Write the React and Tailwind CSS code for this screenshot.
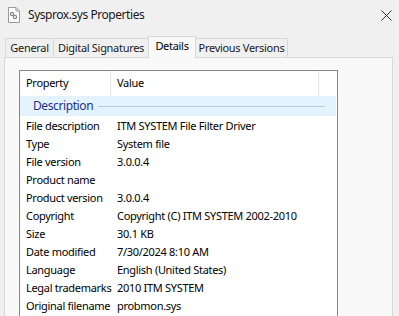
const rows = [
  ['File description', 'ITM SYSTEM File Filter Driver'],
  ['Type', 'System file'],
  ['File version', '3.0.0.4'],
  ['Product name', ''],
  ['Product version', '3.0.0.4'],
  ['Copyright', 'Copyright (C) ITM SYSTEM 2002-2010'],
  ['Size', '30.1 KB'],
  ['Date modified', '7/30/2024 8:10 AM'],
  ['Language', 'English (United States)'],
  ['Legal trademarks', '2010 ITM SYSTEM'],
  ['Original filename', 'probmon.sys'],
]

function FileIcon() {
  return (
    <svg width="14" height="16" viewBox="0 0 14 16" className="shrink-0">
      <path d="M1.5 0.5h7.5l3.5 3.5v11.5h-11z" fill="#fff" stroke="#9a9a9a" />
      <path d="M9 0.5v3.5h3.5" fill="none" stroke="#9a9a9a" />
      <circle cx="5" cy="7" r="1.6" fill="none" stroke="#7d8790" strokeWidth="1.2" />
      <circle cx="8" cy="10" r="1.6" fill="none" stroke="#7d8790" strokeWidth="1.2" />
    </svg>
  )
}

function Tab({ label, w, active }) {
  return (
    <div
      className={
        active
          ? 'h-[22px] -mb-px -ml-px pb-[2px] border border-b-0 border-[#d9d9d9] bg-[#f9f9f9] flex items-center justify-center text-black relative z-10'
          : 'h-[19px] -ml-px first:ml-0 border border-b-0 border-[#d9d9d9] flex items-center justify-center text-[#1a1a1a]'
      }
      style={{ width: w }}
    >
      {label}
    </div>
  )
}

export default function App() {
  return (
    <div
      className="w-[399px] h-[316px] bg-[#f0f0f0] overflow-hidden text-[11px] tracking-[-0.3px] text-black"
      style={{ fontFamily: '"Noto Sans", sans-serif' }}
    >
      <div className="h-[30px] flex items-center pl-[7px] pr-[8px]">
        <FileIcon />
        <span className="ml-[7px] text-[12px] tracking-[-0.45px] text-[#1a1a1a]">Sysprox.sys Properties</span>
        <svg width="11" height="11" viewBox="0 0 11 11" className="ml-auto mr-[-1px]">
          <path d="M0.5 0.5l10 10M10.5 0.5l-10 10" stroke="#333" strokeWidth="1" />
        </svg>
      </div>

      <div className="flex items-end h-[27px] pl-[5px]">
        <Tab label="General" w={49} />
        <Tab label="Digital Signatures" w={96} />
        <Tab label="Details" w={48} active />
        <Tab label="Previous Versions" w={93} />
      </div>

      <div className="ml-[4px] w-[389px] h-[300px] border border-[#d9d9d9] bg-[#f9f9f9] pt-[12px] pl-[14px]">
        <div className="w-[319px] h-[300px] border border-[#828790] bg-white">
          <div className="flex h-[25px] items-center">
            <div className="w-[91px] h-full pl-[6px] flex items-center border-r border-[#e5e5e5]">Property</div>
            <div className="w-[208px] h-full pl-[6px] flex items-center border-r border-[#e5e5e5]">Value</div>
          </div>
          <div className="h-[20px] bg-[#e5f3ff] flex items-center pl-[13px] mr-[1px]">
            <span className="text-[#1e3287] text-[12px] tracking-[-0.4px]">Description</span>
            <div className="flex-1 h-px bg-[#b6cce4] ml-[5px] mr-[11px]" />
          </div>
          <div className="pt-[1px]">
            {rows.map(([k, v]) => (
              <div key={k} className="flex h-[18px] items-center">
                <div className="w-[91px] pl-[6px] whitespace-nowrap">{k}</div>
                <div className="pl-[6px] whitespace-nowrap">{v}</div>
              </div>
            ))}
          </div>
        </div>
      </div>
    </div>
  )
}
